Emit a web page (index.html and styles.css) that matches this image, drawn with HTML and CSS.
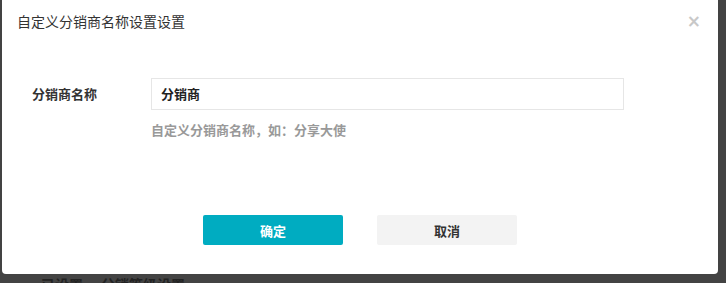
FILE: index.html
```
<!DOCTYPE html>
<html lang="zh-CN">
<head>
<meta charset="utf-8">
<link rel="stylesheet" href="styles.css">
</head>
<body>
<div class="page">
  <div class="modal">
    <div class="modal-header">
      <span class="modal-title">自定义分销商名称设置设置</span>
      <span class="modal-close">×</span>
    </div>
    <div class="modal-body">
      <div class="form-row">
        <label class="form-label">分销商名称</label>
        <div class="form-field">
          <div class="input">分销商</div>
          <div class="hint">自定义分销商名称，如：分享大使</div>
        </div>
      </div>
    </div>
    <div class="modal-footer">
      <button class="btn btn-primary">确定</button>
      <button class="btn btn-default">取消</button>
    </div>
  </div>
  <div class="behind">
    <span class="behind-item">已设置</span>
    <span class="behind-item">分销等级设置</span>
  </div>
</div>
</body>
</html>
```
FILE: styles.css
```
* { box-sizing: border-box; }
html, body {
  margin: 0;
  padding: 0;
  width: 726px;
  height: 283px;
  overflow: hidden;
  background: #434343;
  font-family: "Noto Sans CJK SC", "Noto Sans", sans-serif;
}
.page {
  display: flex;
  flex-direction: column;
  padding-left: 2px;
}
.modal {
  width: 716px;
  height: 274px;
  background: #ffffff;
  border-radius: 0 0 4px 4px;
  display: flex;
  flex-direction: column;
}
.modal-header {
  height: 42px;
  display: flex;
  align-items: center;
  justify-content: space-between;
  padding: 0 17px 0 15px;
}
.modal-title {
  font-size: 14px;
  color: #333333;
  line-height: 20px;
}
.modal-close {
  font-size: 17px;
  line-height: 20px;
  color: #c8c8c8;
  font-family: "DejaVu Sans", sans-serif;
  font-weight: bold;
}
.modal-body {
  padding: 36px 0 0 30px;
  height: 173px;
}
.form-row {
  display: flex;
  align-items: flex-start;
}
.form-label {
  width: 119px;
  font-size: 13px;
  font-weight: bold;
  color: #333333;
  line-height: 31px;
}
.form-field {
  display: flex;
  flex-direction: column;
}
.input {
  width: 473px;
  height: 32px;
  border: 1px solid #e6e6e6;
  padding: 0 9px;
  font-size: 13px;
  font-weight: bold;
  color: #222222;
  line-height: 30px;
}
.hint {
  margin-top: 10px;
  font-size: 13px;
  font-weight: bold;
  color: #999999;
  line-height: 20px;
}
.modal-footer {
  display: flex;
  gap: 34px;
  padding-left: 201px;
}
.btn {
  width: 140px;
  height: 30px;
  border: none;
  border-radius: 2px;
  font-family: "Noto Sans CJK SC", "Noto Sans", sans-serif;
  font-size: 13px;
  font-weight: bold;
  padding: 0;
}
.btn-primary {
  background: #00acc1;
  color: #ffffff;
}
.btn-default {
  background: #f3f3f3;
  color: #333333;
}
.behind {
  display: flex;
  gap: 18px;
  padding: 1px 0 0 39px;
}
.behind-item {
  font-size: 14px;
  font-weight: bold;
  color: #222222;
  line-height: 18px;
}
```
